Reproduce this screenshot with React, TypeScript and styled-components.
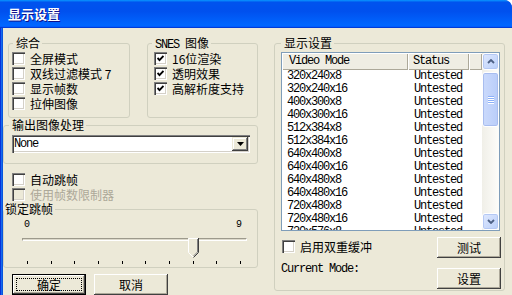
import React from 'react';
import styled, { createGlobalStyle } from 'styled-components';

const CJK = `"Noto Sans CJK SC", "Liberation Sans", sans-serif`;
const MONO = `"Liberation Mono", "Noto Sans CJK SC", monospace`;

const GlobalStyle = createGlobalStyle`
  html, body { margin: 0; padding: 0; }
  body { width: 512px; height: 295px; overflow: hidden; background: #ffffff; }
  * { box-sizing: border-box; }
`;

const Window = styled.div`
  width: 512px;
  height: 295px;
  display: flex;
  flex-direction: column;
  border-top-right-radius: 8px;
  overflow: hidden;
  background: linear-gradient(90deg, #0831d9 0 1px, #166aee 1px 2px, #0855dd 2px 3px, #0845d8 3px);
  font-family: ${CJK};
  font-size: 12px;
  color: #000;
`;

const TitleBar = styled.div`
  height: 28px;
  flex: none;
  display: flex;
  align-items: center;
  padding-left: 8px;
  background: linear-gradient(180deg, #0997ff, #0053ee 8%, #0050ee 40%, #0066ff 88%, #0066ff 93%, #005bff 95%, #003dd7 96%, #003dd7);
`;

const Title = styled.span`
  color: #fff;
  font-weight: 700;
  font-size: 13px;
  line-height: 14px;
  text-shadow: 1px 1px #0f1089;
`;

const Body = styled.div`
  flex: 1;
  margin: 0 0 4px 3px;
  background: #ece9d8;
  display: flex;
  padding-top: 8px;
`;

const LeftCol = styled.div`
  width: 255px;
  flex: none;
  display: flex;
  flex-direction: column;
`;

const TopRow = styled.div`
  display: flex;
  height: 82px;
  padding-left: 5px;
  gap: 17px;
`;

const Group = styled.fieldset<{ $w: number; $h?: number }>`
  margin: 0;
  padding: 0;
  min-width: 0;
  width: ${p => p.$w}px;
  ${p => (p.$h ? `height: ${p.$h}px;` : '')}
  border: 1px solid #d0d0bf;
  border-radius: 3px;
  flex: none;
`;

const Legend = styled.legend<{ $ml: number; $pl?: number }>`
  margin-left: ${p => p.$ml}px;
  padding: 0 2px 0 ${p => (p.$pl ?? 3)}px;
  height: 14px;
  line-height: 14px;
  font-size: 12px;
`;

const Mono = styled.span`
  font-family: ${MONO};
  font-size: 12px;
  letter-spacing: -1.2px;
  white-space: pre;
`;

const CheckList = styled.div<{ $pl: number; $pt?: number; $mt?: number }>`
  display: flex;
  flex-direction: column;
  padding: ${p => p.$pt ?? 1}px 0 0 ${p => p.$pl}px;
  margin-top: ${p => p.$mt ?? 0}px;
`;

const CheckRow = styled.div<{ $disabled?: boolean }>`
  display: flex;
  align-items: center;
  gap: 5px;
  height: 15px;
  line-height: 15px;
  white-space: nowrap;
  color: ${p => (p.$disabled ? '#aca899' : '#000')};
`;

const Box = styled.span<{ $disabled?: boolean }>`
  width: 13px;
  height: 13px;
  flex: none;
  display: flex;
  align-items: center;
  justify-content: center;
  background: ${p => (p.$disabled ? '#ece9d8' : '#ffffff')};
  box-shadow: inset 1px 1px #808080, inset 2px 2px #404040, inset -1px -1px #ffffff, inset -2px -2px #d4d0c8;
`;

const Check: React.FC<{ label: React.ReactNode; checked?: boolean; disabled?: boolean }> = ({ label, checked, disabled }) => (
  <CheckRow $disabled={disabled}>
    <Box $disabled={disabled}>
      {checked && (
        <svg width="7" height="7" viewBox="0 0 7 7">
          <polyline points="0.5,3 2.5,5.2 6.5,1" fill="none" stroke="#000" strokeWidth="1.9" />
        </svg>
      )}
    </Box>
    <span>{label}</span>
  </CheckRow>
);

const ComboWrap = styled.div`
  padding: 3px 0 0 8px;
  height: 30px;
`;

const Combo = styled.div`
  width: 238px;
  height: 18px;
  background: #fff;
  padding: 2px;
  display: flex;
  align-items: center;
  box-shadow: inset 1px 1px #808080, inset 2px 2px #404040, inset -1px -1px #ffffff, inset -2px -2px #d4d0c8;
`;

const ComboText = styled.span`
  flex: 1;
  font-family: ${MONO};
  font-size: 12px;
  letter-spacing: -1.2px;
  line-height: 14px;
`;

const ComboButton = styled.span`
  width: 16px;
  height: 14px;
  background: #ece9d8;
  display: flex;
  align-items: center;
  justify-content: center;
  box-shadow: inset -1px -1px #404040, inset 1px 1px #ece9d8, inset -2px -2px #808080, inset 2px 2px #ffffff;
`;

const ScaleRow = styled.div`
  margin-top: 4px;
  height: 10px;
  display: flex;
  justify-content: space-between;
  padding: 0 15px 0 20px;
  font-family: ${MONO};
  font-size: 10px;
  line-height: 10px;
`;

const TrackBox = styled.div`
  position: relative;
  margin: 2px 0 0 18px;
  width: 225px;
  height: 20px;
`;

const Channel = styled.div`
  margin-top: 8px;
  height: 3px;
  border-top: 1px solid #9d9a8c;
  border-left: 1px solid #9d9a8c;
  border-bottom: 1px solid #ffffff;
  border-right: 1px solid #ffffff;
  background: #dcd9cb;
`;

const Thumb = styled.svg`
  position: absolute;
  top: 0;
`;

const TickRow = styled.div`
  margin: 3px 0 0 18px;
  width: 225px;
  height: 3px;
  padding: 0 6px 0 5px;
  display: flex;
  justify-content: space-between;
`;

const Tick = styled.span`
  width: 1px;
  height: 3px;
  background: #000;
`;

const LockBody = styled.div`
  padding-bottom: 3px;
`;

const ButtonRow = styled.div`
  margin-top: 6px;
  padding-left: 9px;
  display: flex;
  gap: 8px;
`;

const Btn = styled.button<{ $default?: boolean; $w?: number }>`
  position: relative;
  width: ${p => p.$w ?? 74}px;
  height: 21px;
  padding: 0;
  margin: 0;
  background: #ece9d8;
  font-family: ${CJK};
  font-size: 12px;
  color: #000;
  line-height: 14px;
  border: ${p => (p.$default ? '1px solid #000' : 'none')};
  box-shadow: inset -1px -1px #404040, inset 1px 1px #ffffff, inset -2px -2px #aca899, inset 2px 2px #ece9d8;
  ${p =>
    p.$default
      ? `&::after { content: ''; position: absolute; inset: 3px; border: 1px dotted #000; }`
      : ''}
`;

const RightGroup = styled(Group)`
  margin-left: 16px;
  padding: 0 0 0 6px;
`;

const ListBox = styled.div`
  margin-top: 2px;
  width: 219px;
  height: 179px;
  border: 1px solid #7f9db9;
  background: #fff;
  display: flex;
`;

const ListMain = styled.div`
  flex: 1;
  display: flex;
  flex-direction: column;
  overflow: hidden;
`;

const HeaderRow = styled.div`
  display: flex;
  height: 17px;
  flex: none;
`;

const HeaderCell = styled.div<{ $w?: number; $pl?: number }>`
  ${p => (p.$w ? `width: ${p.$w}px; flex: none;` : 'flex: 1;')}
  height: 17px;
  padding-left: ${p => p.$pl ?? 6}px;
  background: #efede3;
  box-shadow: inset 1px 1px #ffffff, inset -1px -1px #aca899;
  font-family: ${MONO};
  font-size: 12px;
  letter-spacing: -1.2px;
  line-height: 17px;
  white-space: nowrap;
`;

const Rows = styled.div`
  flex: 1;
  overflow: hidden;
`;

const Row = styled.div`
  display: flex;
  height: 13px;
  line-height: 13px;
  font-family: ${MONO};
  font-size: 12px;
  letter-spacing: -1.2px;
  white-space: nowrap;
`;

const Cell = styled.span<{ $w: number; $pl: number }>`
  width: ${p => p.$w}px;
  flex: none;
  padding-left: ${p => p.$pl}px;
`;

const ScrollBar = styled.div`
  width: 17px;
  flex: none;
  display: flex;
  flex-direction: column;
  background: linear-gradient(90deg, #f0efe8, #fdfdfa);
`;

const ScrollBtn = styled.div`
  width: 17px;
  height: 17px;
  flex: none;
  border: 1px solid #fff;
  border-radius: 3px;
  background: linear-gradient(135deg, #dfe8fe, #b9cff9);
  box-shadow: inset 0 0 0 1px #b4c8f4;
  display: flex;
  align-items: center;
  justify-content: center;
`;

const Track = styled.div`
  flex: 1;
  padding-top: 2px;
`;

const ThumbBar = styled.div`
  height: 55px;
  border: 1px solid #fff;
  border-radius: 3px;
  background: linear-gradient(90deg, #cbdafc, #b9cdf9);
  box-shadow: inset 0 0 0 1px #a8bdef;
  display: flex;
  flex-direction: column;
  align-items: center;
  justify-content: center;
  gap: 1px;
`;

const Grip = styled.span`
  width: 6px;
  height: 1px;
  background: #8cb0f8;
  box-shadow: 0 1px #ffffff;
`;

const BottomArea = styled.div`
  margin-top: 6px;
  display: flex;
  justify-content: space-between;
  padding-right: 3px;
`;

const BottomLeft = styled.div`
  display: flex;
  flex-direction: column;
  padding-top: 2px;
`;

const CheckIndent = styled.div`
  padding-left: 1px;
`;

const CurrentMode = styled.div`
  margin-top: 9px;
  height: 13px;
  line-height: 13px;
  font-family: ${MONO};
  font-size: 12px;
  letter-spacing: -1.2px;
`;

const ButtonCol = styled.div`
  display: flex;
  flex-direction: column;
  gap: 10px;
`;

const modes = [
  '320x240x8', '320x240x16', '400x300x8', '400x300x16', '512x384x8', '512x384x16',
  '640x400x8', '640x400x16', '640x480x8', '640x480x16', '720x480x8', '720x480x16', '720x576x8',
];

const SLIDER_VALUE = 7;
const SLIDER_MAX = 9;

export default function App() {
  const thumbLeft = 5 + (SLIDER_VALUE * 213) / SLIDER_MAX - 5;
  return (
    <>
      <GlobalStyle />
      <Window>
        <TitleBar>
          <Title>显示设置</Title>
        </TitleBar>
        <Body>
          <LeftCol>
            <TopRow>
              <Group $w={122} $h={82}>
                <Legend $ml={4}>综合</Legend>
                <CheckList $pl={3}>
                  <Check label="全屏模式" />
                  <Check label="双线过滤模式 7" />
                  <Check label="显示帧数" />
                  <Check label="拉伸图像" />
                </CheckList>
              </Group>
              <Group $w={111} $h={82}>
                <Legend $ml={4}>
                  <Mono>{'SNES '}</Mono>图像
                </Legend>
                <CheckList $pl={6}>
                  <Check checked label="16位渲染" />
                  <Check checked label="透明效果" />
                  <Check checked label="高解析度支持" />
                </CheckList>
              </Group>
            </TopRow>
            <Group $w={255} $h={46}>
              <Legend $ml={5}>输出图像处理</Legend>
              <ComboWrap>
                <Combo>
                  <ComboText>None</ComboText>
                  <ComboButton>
                    <svg width="7" height="4" viewBox="0 0 7 4">
                      <polygon points="0,0 7,0 3.5,4" fill="#000" />
                    </svg>
                  </ComboButton>
                </Combo>
              </ComboWrap>
            </Group>
            <CheckList $pl={9} $pt={0} $mt={8}>
              <Check label="自动跳帧" />
              <Check disabled label="使用帧数限制器" />
            </CheckList>
            <Group $w={255}>
              <Legend $ml={0} $pl={1}>锁定跳帧</Legend>
              <LockBody>
                <ScaleRow>
                  <span>0</span>
                  <span>9</span>
                </ScaleRow>
                <TrackBox>
                  <Channel />
                  <Thumb width="11" height="20" viewBox="0 0 11 20" style={{ left: thumbLeft }}>
                    <polygon points="0,0 11,0 11,14.5 5.5,20 0,14.5" fill="#ece9d8" />
                    <polyline points="0.5,14.5 0.5,0.5 10,0.5" fill="none" stroke="#ffffff" />
                    <polyline points="0.5,14.5 5,19" fill="none" stroke="#ffffff" />
                    <polyline points="10.5,0 10.5,14.5 5.5,19.5" fill="none" stroke="#404040" />
                    <polyline points="9.5,1 9.5,14 5.5,18" fill="none" stroke="#808080" />
                  </Thumb>
                </TrackBox>
                <TickRow>
                  {Array.from({ length: SLIDER_MAX + 1 }).map((_, i) => (
                    <Tick key={i} />
                  ))}
                </TickRow>
              </LockBody>
            </Group>
            <ButtonRow>
              <Btn $default>确定</Btn>
              <Btn>取消</Btn>
            </ButtonRow>
          </LeftCol>
          <RightGroup $w={231} $h={255}>
            <Legend $ml={0}>显示设置</Legend>
            <ListBox>
              <ListMain>
                <HeaderRow>
                  <HeaderCell $w={126} $pl={7}>Video Mode</HeaderCell>
                  <HeaderCell $w={61} $pl={5}>Status</HeaderCell>
                  <HeaderCell />
                </HeaderRow>
                <Rows>
                  {modes.map(m => (
                    <Row key={m}>
                      <Cell $w={126} $pl={5}>{m}</Cell>
                      <Cell $w={61} $pl={6}>Untested</Cell>
                    </Row>
                  ))}
                </Rows>
              </ListMain>
              <ScrollBar>
                <ScrollBtn>
                  <svg width="8" height="5" viewBox="0 0 8 5">
                    <polyline points="1,4 4,1 7,4" fill="none" stroke="#4d6185" strokeWidth="1.8" />
                  </svg>
                </ScrollBtn>
                <Track>
                  <ThumbBar>
                    <Grip />
                    <Grip />
                    <Grip />
                    <Grip />
                  </ThumbBar>
                </Track>
                <ScrollBtn>
                  <svg width="8" height="5" viewBox="0 0 8 5">
                    <polyline points="1,1 4,4 7,1" fill="none" stroke="#4d6185" strokeWidth="1.8" />
                  </svg>
                </ScrollBtn>
              </ScrollBar>
            </ListBox>
            <BottomArea>
              <BottomLeft>
                <CheckIndent>
                  <Check label="启用双重缓冲" />
                </CheckIndent>
                <CurrentMode>Current Mode:</CurrentMode>
              </BottomLeft>
              <ButtonCol>
                <Btn $w={64}>测试</Btn>
                <Btn $w={64}>设置</Btn>
              </ButtonCol>
            </BottomArea>
          </RightGroup>
        </Body>
      </Window>
    </>
  );
}
